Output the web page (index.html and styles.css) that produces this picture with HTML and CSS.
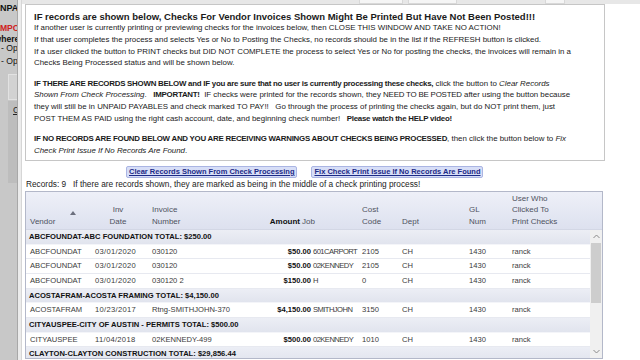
FILE: index.html
```html
<!DOCTYPE html>
<html>
<head>
<meta charset="utf-8">
<title>Checks Being Processed</title>
<link rel="stylesheet" href="styles.css">
</head>
<body>
<div class="app">
  <div class="behind">
    <div class="bl bl-title"><span class="in-u">UNPAID PAYABLES</span></div>
    <div class="bl bl-red"><span class="in-i">IMPORTANT</span></div>
    <div class="bl bl-bold"><span class="in-w">where all</span></div>
    <div class="bl bl-reg">- Open</div>
    <div class="bl bl-reg2">- Open</div>
    <div class="bl-box"></div>
    <div class="bl-band"><span class="bl-c">C</span></div>
  </div>
  <div class="frame"></div>
  <div class="dialog">
    <div class="tabs">
      <span class="tab tab1"></span>
      <span class="tab tab2"></span>
      <span class="tab tab3"></span>
    </div>
    <div class="msg">
      <div class="title">IF records are shown below, Checks For Vendor Invoices Shown Might Be Printed But Have Not Been Posted!!!</div>
      <div>If another user is currently printing or previewing checks for the invoices below, then CLOSE THIS WINDOW AND TAKE NO ACTION!</div>
      <div>If that user completes the process and selects Yes or No to Posting the Checks, no records should be in the list if the REFRESH button is clicked.</div>
      <div>If a user clicked the button to PRINT checks but DID NOT COMPLETE the process to select Yes or No for posting the checks, the invoices will remain in a</div>
      <div>Checks Being Processed status and will be shown below.</div>
      <div class="para"><b>IF THERE ARE RECORDS SHOWN BELOW and IF you are sure that no user is currently processing these checks,</b> click the button to <i>Clear Records</i></div>
      <div><i>Shown From Check Processing</i>.&nbsp;&nbsp; <b>IMPORTANT!</b>&nbsp; IF checks were printed for the records shown, they <span class="caps">NEED TO BE POSTED</span> after using the button because</div>
      <div>they will still be in UNPAID PAYABLES and check marked TO PAY!!&nbsp;&nbsp; Go through the process of printing the checks again, but do NOT print them, just</div>
      <div>POST THEM AS PAID using the right cash account, date, and beginning check number!&nbsp;&nbsp; <b>Please watch the HELP video!</b></div>
      <div class="para"><b>IF NO RECORDS ARE FOUND BELOW AND YOU ARE RECEIVING WARNINGS ABOUT CHECKS BEING PROCESSED</b>, then click the button below to <i>Fix</i></div>
      <div><i>Check Print Issue If No Records Are Found</i>.</div>
    </div>
    <div class="btns">
      <button class="btn btn-clear">Clear Records Shown From Check Processing</button>
      <button class="btn btn-fix">Fix Check Print Issue If No Records Are Found</button>
    </div>
    <div class="records">Records: 9&nbsp;&nbsp; If there are records shown, they are marked as being in the middle of a check printing process!</div>
    <div class="grid">
      <div class="ghead">
        <div class="hc hc-vendor">Vendor<svg class="sort" width="6" height="4" viewBox="0 0 6 4"><path d="M0 4 L3 0 L6 4 Z" fill="#6b6f7d"/></svg></div>
        <div class="hc hc-date">Inv<br>Date</div>
        <div class="hc"></div>
        <div class="hc">Invoice<br>Number</div>
        <div class="hc hc-amt">Amount</div>
        <div class="hc hc-job">Job</div>
        <div class="hc">Cost<br>Code</div>
        <div class="hc">Dept</div>
        <div class="hc">GL<br>Num</div>
        <div class="hc">User Who<br>Clicked To<br>Print Checks</div>
      </div>
      <div class="gbody">
        <div class="rows">
          <div class="grp">ABCFOUNDAT-ABC FOUNDATION TOTAL: $250.00</div>
          <div class="row"><span class="c-v">ABCFOUNDAT</span><span class="c-d">03/01/2020</span><span>030120</span><span class="c-a">$50.00</span><span class="c-j">601CARPORT</span><span>2105</span><span>CH</span><span>1430</span><span>ranck</span></div>
          <div class="row"><span class="c-v">ABCFOUNDAT</span><span class="c-d">03/01/2020</span><span>030120</span><span class="c-a">$50.00</span><span class="c-j">02KENNEDY</span><span>2105</span><span>CH</span><span>1430</span><span>ranck</span></div>
          <div class="row"><span class="c-v">ABCFOUNDAT</span><span class="c-d">03/01/2020</span><span>030120 2</span><span class="c-a">$150.00</span><span class="c-j">H</span><span>0</span><span>CH</span><span>1430</span><span>ranck</span></div>
          <div class="grp">ACOSTAFRAM-ACOSTA FRAMING TOTAL: $4,150.00</div>
          <div class="row"><span class="c-v">ACOSTAFRAM</span><span class="c-d">10/23/2017</span><span>Rtng-SMITHJOHN-370</span><span class="c-a">$4,150.00</span><span class="c-j">SMITHJOHN</span><span>3150</span><span>CH</span><span>1430</span><span>ranck</span></div>
          <div class="grp">CITYAUSPEE-CITY OF AUSTIN - PERMITS TOTAL: $500.00</div>
          <div class="row"><span class="c-v">CITYAUSPEE</span><span class="c-d">11/04/2018</span><span>02KENNEDY-499</span><span class="c-a">$500.00</span><span class="c-j">02KENNEDY</span><span>1010</span><span>CH</span><span>1430</span><span>ranck</span></div>
          <div class="grp">CLAYTON-CLAYTON CONSTRUCTION TOTAL: $29,856.44</div>
        </div>
        <div class="vscroll">
          <div class="sb-arrow"><svg width="7" height="5" viewBox="0 0 7 5"><path d="M0.5 4 L3.5 1 L6.5 4" fill="none" stroke="#8a8a8a" stroke-width="1"/></svg></div>
          <div class="sb-track"><div class="sb-thumb"></div></div>
          <div class="sb-arrow"><svg width="7" height="5" viewBox="0 0 7 5"><path d="M0.5 1 L3.5 4 L6.5 1" fill="none" stroke="#8a8a8a" stroke-width="1"/></svg></div>
        </div>
      </div>
    </div>
  </div>
</div>
</body>
</html>
```
FILE: styles.css
```css
html, body {
  margin: 0;
  padding: 0;
}
body {
  width: 640px;
  height: 360px;
  overflow: hidden;
  background: #ffffff;
  font-family: "Liberation Sans", Arial, sans-serif;
  color: #1b1b1b;
}
.app {
  display: flex;
  height: 360px;
}

/* window behind the dialog */
.behind {
  width: 17px;
  flex: none;
  background: #c8c8c8;
  overflow: hidden;
  white-space: nowrap;
  color: #111;
}
.bl {
  font-size: 8.6px;
  line-height: 10px;
}
.bl-title {
  margin-top: 3px;
  font-weight: bold;
  font-size: 9px;
}
.in-u { margin-left: -6.5px; }
.bl-red {
  margin-top: 10px;
  color: #cf2020;
  font-weight: bold;
}
.in-i { margin-left: -2.5px; }
.bl-bold {
  margin-top: 1px;
  font-weight: bold;
}
.in-w { margin-left: -5.5px; }
.bl-reg { margin-top: -1px; padding-left: 1px; }
.bl-reg2 { margin-top: 3px; padding-left: 1px; }
.bl-box {
  margin: 8px 0 0 8px;
  height: 24px;
  border: 1px solid #e2e2e2;
  border-right: none;
  background: #d2d2d2;
}
.bl-band {
  margin: 1px 0 0 8px;
  height: 82px;
  background: #bdbdbd;
  font-size: 8.6px;
  line-height: 10px;
}
.bl-c {
  display: block;
  padding: 4px 0 0 5px;
  text-decoration: underline;
  color: #222;
}

.frame {
  width: 3px;
  flex: none;
  background: #ececec;
  border-left: 1px solid #a8a8a8;
  border-right: 1px solid #d6d6d6;
}

/* dialog */
.dialog {
  flex: 1;
  padding-left: 3px;
  background: #ffffff;
}
.tabs {
  height: 4px;
  margin-left: -3px;
  background: #e7e7e7;
  display: flex;
}
.tab {
  display: block;
  height: 3px;
  background: #f5f5f5;
  border: 1px solid #d8d8d8;
  border-top: none;
}
.tab1 { margin-left: 337px; width: 42px; }
.tab2 { margin-left: 5px; width: 47px; }
.tab3 { margin-left: 88px; width: 18px; }

.msg {
  width: 580px;
  box-sizing: border-box;
  border: 1px solid #c6c6c6;
  padding: 5px 8px 3px 8px;
  font-size: 7.9px;
  line-height: 11.8px;
  white-space: nowrap;
  color: #1a1a1a;
}
.msg b {
  letter-spacing: -0.25px;
}
.caps {
  letter-spacing: -0.2px;
}
.title {
  font-weight: bold;
  font-size: 9.5px;
  line-height: 12px;
  padding-top: 1px;
  margin-bottom: -1px;
}
.para { margin-top: 8.5px; }

.btns {
  display: flex;
  gap: 14px;
  margin: 5px 0 0 101px;
}
.btn {
  height: 12px;
  padding: 0 2px;
  margin: 0;
  font-family: "Liberation Sans", Arial, sans-serif;
  font-size: 7.5px;
  line-height: 10px;
  font-weight: bold;
  color: #1c2a86;
  text-decoration: underline;
  background: #d7def7;
  border: 1px solid #aab5e3;
  border-radius: 2px;
}
.records {
  margin-top: 1px;
  padding-left: 1px;
  font-size: 8.3px;
  line-height: 11px;
  color: #222;
  white-space: nowrap;
}

.grid {
  margin-top: 1px;
  width: 578px;
  height: 168px;
  box-sizing: border-box;
  border: 1px solid #b3b8c9;
  overflow: hidden;
  font-size: 7.6px;
  white-space: nowrap;
}
.ghead {
  height: 38px;
  display: grid;
  grid-template-columns: 69px 46px 11px 100px 48px 62px 40px 67px 43px 1fr;
  align-items: end;
  padding-bottom: 2px;
  box-sizing: border-box;
  background: linear-gradient(#eef0f8, #dde1ef);
  border-bottom: 1px solid #d3d7e5;
  color: #4e5260;
  font-size: 8px;
  line-height: 11.3px;
}
.hc-vendor {
  padding-left: 4px;
  position: relative;
}
.sort {
  position: absolute;
  left: 44px;
  top: -5px;
}
.hc-date { text-align: center; }
.hc-amt {
  text-align: right;
  font-weight: bold;
  color: #111;
}
.hc-job { padding-left: 2px; }

.gbody {
  display: flex;
  height: 128px;
}
.rows {
  flex: 1;
  overflow: hidden;
}
.grp {
  height: 14.7px;
  line-height: 14.7px;
  box-sizing: border-box;
  padding-left: 3px;
  font-weight: bold;
  color: #111;
  background: linear-gradient(#eceef5, #e1e4ee);
  border-bottom: 1px solid #f4f5f9;
}
.row {
  height: 14.7px;
  line-height: 14.7px;
  box-sizing: border-box;
  display: grid;
  grid-template-columns: 69px 57px 98px 62px 50px 40px 67px 43px 1fr;
  color: #3a3a3a;
  background: #ffffff;
  border-bottom: 1px solid #e7e9f0;
}
.c-v { padding-left: 4px; }
.c-d { letter-spacing: 0.3px; }
.c-a {
  text-align: right;
  padding-right: 1px;
  font-weight: bold;
  color: #111;
}
.c-j {
  padding-left: 1px;
  letter-spacing: -0.55px;
}

.vscroll {
  width: 12px;
  flex: none;
  display: flex;
  flex-direction: column;
  background: #f0f0f0;
}
.sb-arrow {
  height: 13px;
  display: flex;
  align-items: center;
  justify-content: center;
}
.sb-track {
  flex: 1;
}
.sb-thumb {
  height: 60px;
  margin: 0 1px;
  background: #cdcdcd;
}
```
